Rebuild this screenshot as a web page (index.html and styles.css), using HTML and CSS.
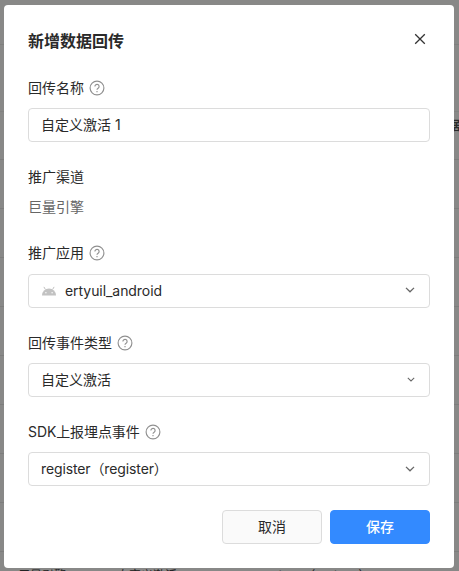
FILE: index.html
```html
<!DOCTYPE html>
<html lang="zh-CN">
<head>
<meta charset="utf-8">
<title>新增数据回传</title>
<link rel="stylesheet" href="styles.css">
</head>
<body>
<svg class="defs" width="0" height="0">
  <symbol id="help" viewBox="0 0 16 16"><circle cx="8" cy="8" r="6.9"/><path d="M5.9 6.5a2.1 2.1 0 1 1 3.4 1.6C8.5 8.7 8 9 8 9.8"/><path d="M8 11.1v1.2"/></symbol>
  <symbol id="chevron" viewBox="0 0 10 6"><path d="M1 .9 5 4.8 9 .9"/></symbol>
</svg>
<div class="page">
  <div class="toolbar"></div>
  <div class="filters"></div>
  <div class="row head"><span>据</span></div>
  <div class="row"></div><div class="row"></div><div class="row"></div><div class="row"></div>
  <div class="row"></div><div class="row"></div><div class="row"></div><div class="row"></div>
  <div class="row last"><span>巨量引擎</span><span>自定义激活</span><span>register（register）</span></div>
</div>
<form class="modal">
  <header class="modal-head">
    <h1>新增数据回传</h1>
    <svg class="close" viewBox="0 0 12 12"><path d="m1.2 1.2 9.6 9.6M10.8 1.2l-9.6 9.6"/></svg>
  </header>
  <section class="field">
    <div class="label">回传名称<svg class="help"><use href="#help"/></svg></div>
    <div class="control">自定义激活 1</div>
  </section>
  <section class="field channel">
    <div class="label">推广渠道</div>
    <div class="value">巨量引擎</div>
  </section>
  <section class="field app">
    <div class="label">推广应用<svg class="help"><use href="#help"/></svg></div>
    <div class="control">
      <svg class="android" viewBox="0 0 16 10"><path d="M1 9.5a7 7 0 0 1 14 0z"/><path class="antenna" d="M4.4 3.5 2.9.9M11.6 3.5 13.1.9"/><circle cx="4.9" cy="6.8" r=".7"/><circle cx="11.1" cy="6.8" r=".7"/></svg>
      ertyuil_android<svg class="chevron"><use href="#chevron"/></svg>
    </div>
  </section>
  <section class="field">
    <div class="label">回传事件类型<svg class="help"><use href="#help"/></svg></div>
    <div class="control">自定义激活<svg class="chevron small" viewBox="0 0 10 6"><use href="#chevron" width="10" height="6"/></svg></div>
  </section>
  <section class="field">
    <div class="label sdk">SDK上报埋点事件<svg class="help"><use href="#help"/></svg></div>
    <div class="control event">register（register）<svg class="chevron"><use href="#chevron"/></svg></div>
  </section>
  <footer class="actions">
    <button type="button" class="btn">取消</button>
    <button type="button" class="btn primary">保存</button>
  </footer>
</form>
</body>
</html>
```
FILE: styles.css
```css
* { box-sizing: border-box; }
body {
  margin: 0;
  width: 459px;
  height: 571px;
  overflow: hidden;
  position: relative;
  background: #888887;
  color: #2a2a2a;
  font: 14px/20px Inter, "Noto Sans CJK SC", sans-serif;
}
.defs { position: absolute; }
svg { display: block; flex: none; fill: none; stroke: currentColor; }

.page { height: 571px; overflow: hidden; font-size: 12px; }
.toolbar { height: 45px; border-bottom: 1px solid #7f7f7e; }
.filters { height: 67px; border-bottom: 1px solid #818180; }
.row {
  height: 49px;
  display: flex;
  align-items: center;
  border-bottom: 1px solid #7d7d7c;
}
.row.head { height: 48px; font-weight: 700; }
.row.head span { margin-left: 448px; margin-top: -20px; }
.row.last { padding: 0 18px; color: #222; white-space: nowrap; }
.row.last span:first-child { width: 99px; flex: none; }
.row.last span:nth-child(2) { width: 143px; flex: none; }

.modal {
  position: absolute;
  inset: 5px 5px 3px 4px;
  padding: 24px;
  background: #fff;
  border-radius: 4px;
}
.modal-head {
  display: flex;
  justify-content: space-between;
  height: 24px;
  margin-bottom: 25px;
}
h1 { margin: 0; font-size: 16px; line-height: 24px; font-weight: 700; }
.close { width: 12px; height: 12px; margin: 4px 4px 0 0; stroke-width: 1.3; color: #333; }

.field { margin-bottom: 25px; }
.label { display: flex; align-items: center; height: 20px; margin-bottom: 10px; }
.label.sdk { letter-spacing: -.1px; }
.help { width: 16px; height: 16px; margin-left: 5px; color: #909090; stroke-width: 1.15; }
.control {
  display: flex;
  align-items: center;
  height: 34px;
  padding: 0 14px 0 12px;
  border: 1px solid #dcdcdc;
  border-radius: 4px;
}
.channel { margin-bottom: 26px; }
.app .label { margin-bottom: 11px; }
.app .control { letter-spacing: -.06px; }
.control.event { letter-spacing: -.12px; }
.value { color: #666; }
.android { width: 16px; height: 10px; margin-right: 8px; stroke: none; fill: #c2c2c2; }
.android .antenna { stroke: #c2c2c2; }
.android circle { fill: #fff; }
.chevron { width: 10px; height: 6px; margin-left: auto; margin-top: -2px; color: #666; stroke-width: 1.3; }
.event .chevron { margin-top: 0; }
.chevron.small { width: 8px; height: 5px; }

.actions { display: flex; justify-content: flex-end; gap: 8px; margin-top: -1px; }
.btn {
  width: 100px;
  height: 34px;
  padding: 0;
  border: 1px solid #dcdcdc;
  border-radius: 4px;
  background: #fafafa;
  color: #2a2a2a;
  font: inherit;
}
.btn.primary { border-color: #338aff; background: #338aff; color: #fff; font-weight: 500; }
```
